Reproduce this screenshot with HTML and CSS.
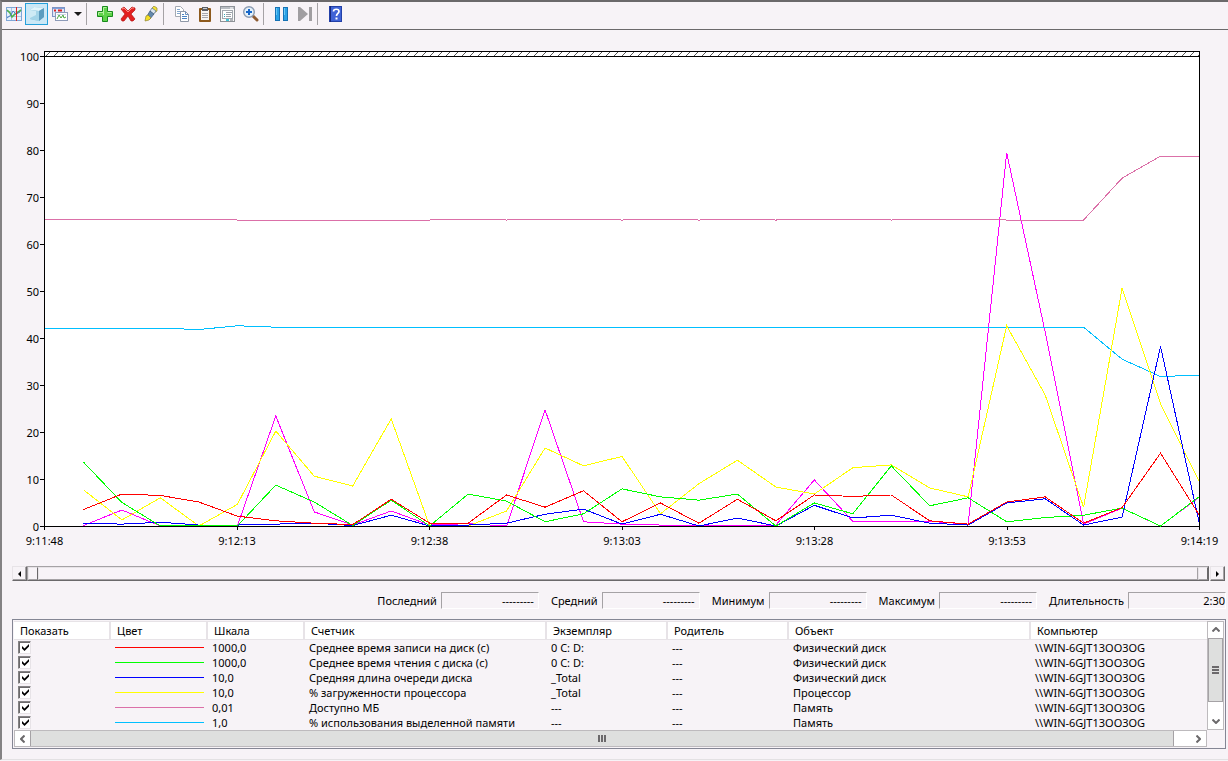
FILE: index.html
```
<!DOCTYPE html>
<html lang="ru">
<head>
<meta charset="utf-8">
<title>Системный монитор</title>
<link rel="stylesheet" href="styles.css">
</head>

<body>
<div class="monitor">

<div class="toolbar">
	<button class="tool" type="button" title="Просмотр текущей активности">
		<svg width="16" height="14" viewBox="0 0 16 14"><rect x=".5" y=".5" width="15" height="13" fill="#e6f0fb" stroke="#7fa6d6"/><path d="M1 4.500h14M1 9.500h14M5.500 1v12" stroke="#a9c4e4"/><path d="M1 3l3 3 2 4 3-3 2-1 4-3" fill="none" stroke="#4fb04a" stroke-width="1.600"/><path d="M1 11l4-3 2-4 3 3 4-2" fill="none" stroke="#4a7fc4"/><path d="M10.500 0v14" stroke="#d22"/></svg>
	</button>
	<button class="tool tool-active" type="button" title="Просмотр данных журнала">
		<svg width="16" height="16" viewBox="0 0 16 16"><path d="M1 4l4-3 10 1v9l-5 4-9-2z" fill="#8cc4dc"/><path d="M1 4l4-3 10 1-5 3z" fill="#e2f5fb"/><path d="M10 5l5-3v9l-5 4z" fill="#5c9cbf"/><path d="M1 4l9 1v10l-9-2z" fill="#a3d5e8"/><path d="M1 4l6 1v4l-6 3z" fill="#cdebf5"/></svg>
	</button>
	<button class="tool" type="button" title="Тип диаграммы">
		<svg width="16" height="14" viewBox="0 0 16 14"><rect x=".5" y=".5" width="12" height="9" fill="#dfe6f6" stroke="#7f94c4"/><path d="M1 1.500h11" stroke="#7ea1dc"/><path d="M2 3.500h2M6 3.500h4" stroke="#d22" stroke-width="2"/><rect x="3.500" y="5.500" width="12" height="8" fill="#fff" stroke="#8d9ab8"/><path d="M5 12l2-4 2 3 2-3 1 3 2-1" fill="none" stroke="#4da944"/><path d="M5 7.500h9" stroke="#c9d3e6"/></svg>
	</button>
	<button class="drop" type="button" title="Ещё">
		<svg width="8" height="4" viewBox="0 0 8 4"><path d="M0 0h8L4 4z" fill="#1a1a1a"/></svg>
	</button>
	<span class="sep"></span>
	<button class="tool" type="button" title="Добавить">
		<svg width="16" height="16" viewBox="0 0 16 16"><path d="M5.500 .5h5v5h5v5h-5v5h-5v-5h-5v-5h5z" fill="#5fd34a" stroke="#188a1c"/><path d="M6.500 9V1.500h3M1.500 9V6.500h5M10.500 6.500h4" fill="none" stroke="#b4f0a0"/></svg>
	</button>
	<button class="tool" type="button" title="Удалить">
		<svg width="16" height="16" viewBox="0 0 16 16"><path d="M1 3l3-2 4 4 4-4 3 1v2l-4 4 4 5-2 2h-2L8 10l-4 5H2l-1-2 4-5z" fill="#e32020" stroke="#b51616" stroke-width=".7"/><path d="M2 3l2-1 4 4 4-4h2" fill="none" stroke="#ff8d84"/></svg>
	</button>
	<button class="tool" type="button" title="Выделить">
		<svg width="14" height="16" viewBox="0 0 14 16"><path d="M8 2l2-2 3 2v3l-3 2z" fill="#f3e135" stroke="#8d8434" stroke-width=".7"/><path d="M6 5l2-3 4 3-3 4z" fill="#dbe5ee" stroke="#58708c" stroke-width=".7"/><path d="M3 10l3-5 4 3-4 5z" fill="#6388ab" stroke="#3c5875" stroke-width=".7"/><path d="M1 15l1-5 2-1 3 3-2 2z" fill="#f5df25" stroke="#8d8434" stroke-width=".7"/></svg>
	</button>
	<span class="sep"></span>
	<button class="tool" type="button" title="Копировать свойства">
		<svg width="14" height="16" viewBox="0 0 14 16"><path d="M.5 .5h5l3 3v7h-8z" fill="#fff" stroke="#a4a9b2"/><path d="M2 3.500h3M2 5.500h4M2 7.500h3" stroke="#82a6cd"/><path d="M5.500 5.500h5l3 3v7h-8z" fill="#fff" stroke="#8f98a8"/><path d="M10.500 5.500v3h3" fill="none" stroke="#6a8fc0"/><path d="M7 8.500h2M7 10.500h5M7 12.500h5" stroke="#4a83c4"/></svg>
	</button>
	<button class="tool" type="button" title="Вставить список счетчиков">
		<svg width="12" height="15" viewBox="0 0 12 15"><rect x="0" y="1" width="12" height="14" rx="1" fill="#8d5a1e"/><rect x="2" y="3" width="8" height="10" fill="#f6f6f2"/><path d="M3 6.500h6M3 8.500h6M3 10.500h6" stroke="#a5a8ae"/><path d="M3 0h6v4H3z" fill="#5a5f66"/><path d="M4 1.500h4" stroke="#c9cdd2"/></svg>
	</button>
	<button class="tool" type="button" title="Свойства">
		<svg width="15" height="16" viewBox="0 0 15 16"><rect x=".5" y=".5" width="14" height="15" fill="#fafafa" stroke="#8e9298"/><path d="M1 2h13" stroke="#b8bcc2" stroke-width="2"/><path d="M10 2h3" stroke="#fff"/><rect x="2.500" y="4.500" width="10" height="8" fill="#fff" stroke="#a3a8af"/><path d="M6 6.500h6M6 8.500h5M6 10.500h5" stroke="#9aa0a8"/><path d="M4 8.500h1M4 10.500h1" stroke="#2fa8b8"/><path d="M6 14h3" stroke="#41c6d8" stroke-width="2"/><path d="M10 14h3" stroke="#b2b5ba" stroke-width="2"/></svg>
	</button>
	<button class="tool" type="button" title="Масштаб">
		<svg width="16" height="16" viewBox="0 0 16 16"><path d="M9 9l5 5" stroke="#8e5c32" stroke-width="3" stroke-linecap="round"/><circle cx="6" cy="6" r="5.300" fill="#e4f1fb" stroke="#8b9bb0" stroke-width="1.400"/><path d="M3 6h6M6 3v6" stroke="#1767c9" stroke-width="2"/></svg>
	</button>
	<span class="sep"></span>
	<button class="tool" type="button" title="Остановить отображение">
		<svg width="14" height="14" viewBox="0 0 14 14"><rect x=".5" y=".5" width="4" height="13" fill="#2aa2e6" stroke="#1672b4"/><rect x="8.500" y=".5" width="4" height="13" fill="#2aa2e6" stroke="#1672b4"/><path d="M1.500 1v7M9.500 1v7" stroke="#6cc8f6"/></svg>
	</button>
	<button class="tool" type="button" title="Обновить данные">
		<svg width="14" height="14" viewBox="0 0 14 14"><path d="M0 0h2l8 7-8 7H0zM11 0h3v14h-3z" fill="#a09ea1"/></svg>
	</button>
	<span class="sep"></span>
	<button class="tool" type="button" title="Справка">
		<svg width="13" height="16" viewBox="0 0 13 16"><rect width="13" height="16" fill="#2340a8"/><rect x="2" y="1" width="10" height="14" fill="#3f63d6"/><path d="M1.500 0v16" stroke="#16277a"/><path d="M4.500 5.500c0-3 5.500-3 5.500 0 0 2-2.500 2-2.500 4.500" fill="none" stroke="#fff" stroke-width="1.700"/><path d="M6.500 11.500h2v2h-2z" fill="#fff"/></svg>
	</button>
</div>

<div class="chart">
	<div class="y-axis">
		<span>100</span><span>90</span><span>80</span><span>70</span><span>60</span><span>50</span><span>40</span><span>30</span><span>20</span><span>10</span><span>0</span>
	</div>
	<div class="plot">
		<svg class="hatch">
			<defs><pattern id="hatch" width="8" height="4" patternUnits="userSpaceOnUse"><path d="M4 0h1v1h-1zM3 1h1v1h-1zM2 2h1v1h-1zM1 3h1v1h-1z" fill="#555"/></pattern></defs>
			<rect width="100%" height="4" fill="url(#hatch)"/>
		</svg>
		<svg class="lines" id="lines" viewBox="0 0 30 100" preserveAspectRatio="none"></svg>
	</div>
	<div class="x-axis">
		<span>9:11:48</span><span>9:12:13</span><span>9:12:38</span><span>9:13:03</span><span>9:13:28</span><span>9:13:53</span><span>9:14:19</span>
	</div>
</div>

<div class="range">
	<button class="range-btn" type="button" title="Назад"><svg width="3" height="6" viewBox="0 0 3 6"><path d="M3 0v6L0 3z"/></svg></button>
	<div class="range-track"><span class="range-thumb"></span><span class="range-body"></span><span class="range-thumb"></span></div>
	<button class="range-btn" type="button" title="Вперед"><svg width="3" height="6" viewBox="0 0 3 6"><path d="M0 0v6l3-3z"/></svg></button>
</div>

<div class="stats">
	<label for="last">Последний</label><input id="last" type="text" value="---------" readonly>
	<label for="avg">Средний</label><input id="avg" type="text" value="---------" readonly>
	<label for="min">Минимум</label><input id="min" type="text" value="---------" readonly>
	<label for="max">Максимум</label><input id="max" type="text" value="---------" readonly>
	<label for="duration">Длительность</label><input id="duration" class="duration" type="text" value="2:30" readonly>
</div>

<div class="legend">
	<div class="legend-view">
	<table>
		<colgroup><col class="c-small"><col class="c-small"><col class="c-small"><col class="c-large"><col class="c-mid"><col class="c-mid"><col class="c-large"><col></colgroup>
		<thead>
			<tr><th>Показать</th><th>Цвет</th><th>Шкала</th><th>Счетчик</th><th>Экземпляр</th><th>Родитель</th><th>Объект</th><th>Компьютер</th></tr>
		</thead>
		<tbody>
			<tr><td><input type="checkbox" aria-label="Показать" checked></td><td><i class="key red"></i></td><td>1000,0</td><td>Среднее время записи на диск (с)</td><td>0 C: D:</td><td>---</td><td>Физический диск</td><td>\\WIN-6GJT13OO3OG</td></tr>
			<tr><td><input type="checkbox" aria-label="Показать" checked></td><td><i class="key green"></i></td><td>1000,0</td><td>Среднее время чтения с диска (с)</td><td>0 C: D:</td><td>---</td><td>Физический диск</td><td>\\WIN-6GJT13OO3OG</td></tr>
			<tr><td><input type="checkbox" aria-label="Показать" checked></td><td><i class="key blue"></i></td><td>10,0</td><td>Средняя длина очереди диска</td><td>_Total</td><td>---</td><td>Физический диск</td><td>\\WIN-6GJT13OO3OG</td></tr>
			<tr><td><input type="checkbox" aria-label="Показать" checked></td><td><i class="key yellow"></i></td><td>10,0</td><td>% загруженности процессора</td><td>_Total</td><td>---</td><td>Процессор</td><td>\\WIN-6GJT13OO3OG</td></tr>
			<tr><td><input type="checkbox" aria-label="Показать" checked></td><td><i class="key pink"></i></td><td>0,01</td><td>Доступно МБ</td><td>---</td><td>---</td><td>Память</td><td>\\WIN-6GJT13OO3OG</td></tr>
			<tr><td><input type="checkbox" aria-label="Показать" checked></td><td><i class="key cyan"></i></td><td>1,0</td><td>% использования выделенной памяти</td><td>---</td><td>---</td><td>Память</td><td>\\WIN-6GJT13OO3OG</td></tr>
		</tbody>
	</table>
	</div>
	<div class="vscroll">
		<button type="button" title="Вверх"><svg width="8" height="5" viewBox="0 0 8 5"><path d="M.5 4.500L4 1l3.500 3.500"/></svg></button>
		<div class="vthumb"><i></i><i></i><i></i></div>
		<button type="button" title="Вниз"><svg width="8" height="5" viewBox="0 0 8 5"><path d="M.5 .5L4 4 7.500 .5"/></svg></button>
	</div>
	<div class="hscroll">
		<button type="button" title="Влево"><svg width="5" height="8" viewBox="0 0 5 8"><path d="M4.500 .5L1 4l3.500 3.500"/></svg></button>
		<div class="hthumb"><i></i><i></i><i></i></div>
		<button type="button" title="Вправо"><svg width="5" height="8" viewBox="0 0 5 8"><path d="M.5 .5L4 4 .5 7.500"/></svg></button>
	</div>
</div>

</div>
<script src="chart.js"></script>
</body>
</html>
```
FILE: chart.js
```
// one sample every 5 seconds, values in percent of the scale
// "start" is the index of the first sample
var series = [
	{ color: "#ff00ff", start: 1, data: [0.1, 3.4, 0, 0, 0, 23.4, 3, 0.2, 3.2, 0.2, 0.5, 0, 24.7, 0.9, 0.4, 0.2, 0.2, 0.2, 0.2, 9.8, 1, 1, 1, 0.4, 79.4, 41.3, 0.4, 3.8, 0, 6.1] },
	{ color: "#00bfff", start: 0, data: [42.1, 42.1, 42.1, 42.1, 41.8, 42.6, 42.3, 42.3, 42.3, 42.3, 42.3, 42.3, 42.3, 42.3, 42.3, 42.3, 42.3, 42.3, 42.3, 42.3, 42.3, 42.3, 42.3, 42.3, 42.3, 42.3, 42.3, 42.3, 35.5, 31.8, 32.1] },
	{ color: "#db70a8", start: 0, data: [65.3, 65.3, 65.3, 65.3, 65.3, 65.1, 65.1, 65.1, 65.1, 65.1, 65.1, 65.3, 65.1, 65.3, 65.3, 65.1, 65.3, 65.1, 65.3, 65.1, 65.3, 65.3, 65.1, 65.3, 65.3, 65.1, 65.1, 65.1, 74, 78.7, 78.7] },
	{ color: "#ffff00", start: 1, data: [7.7, 1.3, 6, 0, 4.6, 20.2, 10.6, 8.5, 22.8, 0, 0, 3.2, 16.6, 12.8, 14.8, 2.6, 9, 14, 8.3, 6.8, 12.4, 13, 8.1, 6.2, 42.6, 27.9, 4, 50.6, 26, 9.6] },
	{ color: "#0000ff", start: 1, data: [0.6, 0.4, 0.8, 0.2, 0.2, 0.4, 0.6, 0.1, 2.3, 0, 0.2, 0.6, 2.5, 3.6, 0.4, 2.5, 0, 1.7, 0, 4.4, 1.7, 2.3, 0.6, 0.2, 4.9, 5.8, 0.2, 1.9, 38.2, 0.9] },
	{ color: "#00ff00", start: 1, data: [13.6, 5, 0, 0, 0, 8.7, 5.1, 0.1, 5.5, 0, 6.8, 5.3, 0.9, 2.6, 7.9, 6.2, 5.5, 6.8, 0, 4.9, 2.6, 12.8, 4.3, 6, 0.9, 1.8, 2.3, 3.8, 0, 6.2] },
	{ color: "#ff0000", start: 1, data: [3.5, 6.8, 6.5, 5.1, 2.1, 1.1, 0.6, 0.3, 5.7, 0.6, 0.6, 6.6, 4, 7.5, 0.9, 4.9, 0.6, 5.7, 1.1, 6.6, 6.3, 6.6, 1.1, 0.4, 5.1, 6.2, 0.6, 3.9, 15.5, 2.4] }
];

var lines = document.getElementById("lines");

for (var i = 0; i < series.length; i++) {
	var points = [];
	for (var j = 0; j < series[i].data.length; j++) {
		points.push((series[i].start + j) + "," + (100 - series[i].data[j]));
	}
	var line = document.createElementNS("http://www.w3.org/2000/svg", "polyline");
	line.setAttribute("points", points.join(" "));
	line.setAttribute("stroke", series[i].color);
	lines.appendChild(line);
}
```
FILE: styles.css
```
* {
	box-sizing: border-box;
}
body {
	margin: 0;
	background: #f7f3f7;
	color: #000;
	font-family: "Noto Sans", "Open Sans", sans-serif;
	font-size: 11px;
	line-height: 13px;
}
button, input {
	margin: 0;
	padding: 0;
	font: inherit;
	color: inherit;
}
button {
	display: flex;
	align-items: center;
	justify-content: center;
	flex: none;
}
.monitor {
	border-top: 2px solid #6b696b;
	border-left: 2px solid #848284;
	border-bottom: 1px solid #e3e1e3;
	padding-bottom: 10px;
}

/* toolbar */
.toolbar {
	display: flex;
	height: 28px;
	padding-top: 1px;
	border-bottom: 1px solid #6b696b;
}
.tool {
	width: 23px;
	height: 22px;
	border: 1px solid transparent;
	background: none;
}
.tool-active {
	border-color: #26a0da;
	background: #cbe8f6;
}
.drop {
	width: 14px;
	height: 22px;
	border: none;
	background: none;
}
.sep {
	width: 1px;
	height: 22px;
	margin: 0 6px 0 1px;
	background: #a5a2a5;
}

/* chart */
.chart {
	display: grid;
	grid-template-columns: 42px 1fr;
	padding: 20px 28px 0 0;
}
.y-axis {
	display: flex;
	flex-direction: column;
	justify-content: space-between;
	height: 483px;
}
.y-axis span {
	display: flex;
	align-items: center;
	justify-content: flex-end;
	height: 13px;
}
.y-axis span::after {
	content: "";
	width: 4px;
	height: 1px;
	margin-left: 1px;
	background: #000;
}
.plot {
	height: 476px;
	margin-top: 1px;
	border: 1px solid #000;
	background: #fff;
}
.hatch {
	display: block;
	width: 100%;
	height: 5px;
	border-bottom: 1px solid #000;
	shape-rendering: crispEdges;
}
.lines {
	display: block;
	width: 100%;
	height: 470px;
	margin-top: -1px;
	overflow: visible;
}
.lines polyline {
	fill: none;
	stroke-width: 1px;
	vector-effect: non-scaling-stroke;
	shape-rendering: crispEdges;
}
.x-axis {
	grid-column: 2;
	display: flex;
	justify-content: space-between;
	margin-top: -6px;
}
.x-axis span {
	display: flex;
	flex-direction: column;
	align-items: center;
	width: 1px;
	white-space: nowrap;
}
.x-axis span::before {
	content: "";
	width: 1px;
	height: 3px;
	margin-bottom: 4px;
	background: #000;
}

/* time range */
.range {
	display: flex;
	align-items: center;
	margin: 19px 3px 0 10px;
}
.range-btn {
	width: 15px;
	height: 15px;
	border: 1px solid;
	border-color: #e7e3e7 #6b696b #6b696b #e7e3e7;
	background: #f7f3f7;
	box-shadow: inset -1px -1px #a5a2a5;
}
.range-track {
	display: flex;
	flex: 1;
	height: 15px;
	margin-right: 1px;
	border: 1px solid;
	border-color: #a5a2a5 #6b696b #6b696b #a5a2a5;
}
.range-thumb {
	width: 10px;
	border: 1px solid;
	border-color: #e7e3e7 #6b696b #a5a2a5 #e7e3e7;
}
.range-body {
	flex: 1;
	border: 1px solid;
	border-color: #e7e3e7 #a5a2a5 #a5a2a5 #e7e3e7;
}

/* statistics */
.stats {
	display: flex;
	justify-content: flex-end;
	align-items: center;
	margin: 11px 2px 0 0;
}
.stats input {
	width: 98px;
	height: 17px;
	margin: 0 12px 0 4px;
	padding-right: 4px;
	border: 1px solid;
	border-color: #a5a2a5 #fff #fff #a5a2a5;
	background: #f7f3f7;
	text-align: right;
}
.stats .duration {
	margin-right: 0;
	padding-right: 0;
}

/* counters list */
.legend {
	display: grid;
	grid-template-columns: 1fr 17px;
	margin: 10px 2px 0 10px;
	padding: 1px;
	border: 1px solid #848694;
}
.legend-view {
	height: 109px;
	overflow: hidden;
}
table {
	width: 100%;
	table-layout: fixed;
	border-collapse: separate;
	border-spacing: 0;
}
.c-small {
	width: 97px;
}
.c-mid {
	width: 121px;
}
.c-large {
	width: 242px;
}
th {
	height: 19px;
	padding: 0 0 0 6px;
	border-top: 1px solid #e7e3e7;
	border-right: 2px solid #e7e3e7;
	border-bottom: 1px solid #e7e3e7;
	background: #fff;
	font-weight: normal;
	text-align: left;
}
th:last-child {
	border-right: none;
}
td {
	height: 15px;
	padding: 0 4px;
	white-space: nowrap;
}
input[type="checkbox"] {
	display: block;
	appearance: none;
	width: 13px;
	height: 13px;
	border: 1px solid;
	border-color: #848284 #e7e3e7 #e7e3e7 #848284;
	box-shadow: inset 1px 1px #6b696b;
	background: #fff;
}
input[type="checkbox"]:checked::after {
	content: "";
	display: block;
	width: 7px;
	height: 7px;
	margin: 2px 0 0 3px;
	background: #000;
	clip-path: polygon(0 30%, 36% 64%, 100% 0, 100% 36%, 36% 100%, 0 66%);
}
.key {
	display: block;
	height: 1px;
}
.red { background: #ff0000; }
.green { background: #00ff00; }
.blue { background: #0000ff; }
.yellow { background: #ffff00; }
.pink { background: #db70a8; }
.cyan { background: #00bfff; }

/* scroll bars */
.vscroll, .hscroll {
	display: flex;
	background: #fff;
}
.vscroll {
	flex-direction: column;
	justify-content: space-between;
	border: 1px solid #bdbabd;
}
.hscroll {
	height: 17px;
	border: 1px solid #bdbabd;
}
.vscroll button, .hscroll button {
	width: 15px;
	height: 15px;
	border: none;
	background: #fff;
}
.vscroll path, .hscroll path {
	fill: none;
	stroke: #6b696b;
	stroke-width: 2px;
}
.vthumb, .hthumb {
	display: flex;
	align-items: center;
	justify-content: center;
	border: 1px solid #a5a2a5;
	background: #dedfde;
}
.vthumb {
	flex-direction: column;
	height: 64px;
	gap: 1px;
	margin-bottom: 12px;
}
.vthumb i {
	width: 7px;
	height: 2px;
	background: #6b696b;
}
.hthumb {
	flex: 1;
	gap: 1px;
	margin-right: 17px;
	border-width: 0 1px;
}
.hthumb i {
	width: 2px;
	height: 7px;
	background: #6b696b;
}
```
